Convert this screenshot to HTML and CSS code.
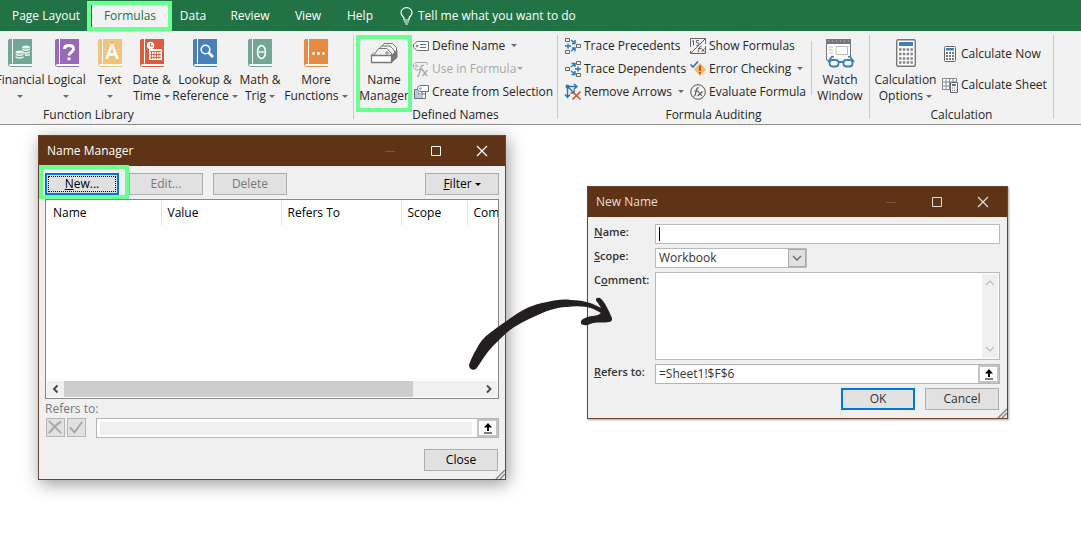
FILE: index.html
```html
<!DOCTYPE html>
<html lang="en">
<head>
<meta charset="utf-8">
<title>Name Manager</title>
<link rel="stylesheet" href="styles.css">
</head>
<body>
<svg class="defs" aria-hidden="true">
  <symbol id="book" viewBox="0 0 24 28">
    <path d="M2 0H24V25H3Q1 25 1 26.5T3 28Q0 28 0 25V2Q0 0 2 0Z" fill="currentColor"/>
    <path d="M4.500 0V24.500" stroke="#fff" stroke-width="1"/>
    <path d="M1 26.500Q1 25 3 25H24V27H1Z" fill="#fff"/>
    <path d="M1 26.500Q1.500 27.500 3 27.500H24" fill="none" stroke="currentColor"/>
  </symbol>
  <symbol id="up" viewBox="0 0 10 11">
    <path d="M5 0L9 4.500H6V8H4V4.500H1ZM1 9.500H9V10.500H1Z" fill="#000"/>
  </symbol>
  <symbol id="grip" viewBox="0 0 10 10">
    <path d="M1 10L10 1M5 10L10 5" stroke="#8a8a8a" stroke-width="1.500"/>
  </symbol>
</svg>

<nav class="tabs">
  <button class="tab">Page Layout</button>
  <button class="tab tab-active">Formulas<span class="mark mark-tab"></span></button>
  <button class="tab">Data</button>
  <button class="tab">Review</button>
  <button class="tab">View</button>
  <button class="tab">Help</button>
  <button class="tab tell">
    <svg width="13" height="18" viewBox="0 0 13 18" fill="none" stroke="#fff" stroke-width="1.200"><path d="M4 13V11.500C4 10 1 8.500 1 5.700A5.400 5 0 0 1 12 5.700C12 8.500 9 10 9 11.500V13ZM4 15H9M5 17H8"/></svg>
    Tell me what you want to do
  </button>
</nav>

<section class="ribbon">
  <div class="group group-library">
    <div class="library">
      <button class="big"><svg width="24" height="28" class="teal"><use href="#book"/><g fill="#eaf4ef"><ellipse cx="18" cy="8" rx="4" ry="1.600"/><path d="M14 9.500q4 2 8 0v1.500q-4 2-8 0zM14 12.200q4 2 8 0v1.500q-4 2-8 0zM17 15q3 1 5-.2v1.500q-2 1-5 .5z"/><ellipse cx="11.500" cy="13" rx="4" ry="1.600"/><path d="M7.500 14.500q4 2 8 0v1.500q-4 2-8 0zM7.500 17.200q4 2 8 0v1.500q-4 2-8 0z"/></g></svg><span>Financial<br><i class="caret"></i></span></button>
      <button class="big"><svg width="24" height="28" class="purple"><use href="#book"/><path d="M9.500 10Q9.500 6.500 14 6.500T18.500 10Q18.500 11.800 16.300 13.200T14 16.500M14 18.500V21.300" fill="none" stroke="#fff" stroke-width="2.900"/></svg><span>Logical<br><i class="caret"></i></span></button>
      <button class="big"><svg width="24" height="28" class="yellow"><use href="#book"/><path d="M8.500 20L13.500 6.500H14.500L19.500 20M10.500 15.500H17.500" fill="none" stroke="#fff" stroke-width="2.600"/></svg><span>Text<br><i class="caret"></i></span></button>
      <button class="big"><svg width="24" height="28" class="red"><use href="#book"/><circle cx="10.500" cy="6.500" r="3.700" fill="#fff"/><path d="M10.500 4V7H13" fill="none" stroke="#d75f40"/><path d="M9 10H22V21H9Z" fill="#fff"/><path d="M10 12.500H21M10 15.500H21M10 18.500H21M11.500 12V20M14 12V20M16.500 12V20M19 12V20" stroke="#d75f40" stroke-width=".9"/></svg><span>Date &amp;<br>Time <i class="caret"></i></span></button>
      <button class="big"><svg width="24" height="28" class="blue"><use href="#book"/><circle cx="12.500" cy="10.500" r="4.300" fill="none" stroke="#fff" stroke-width="1.600"/><path d="M15.500 13.500L20 18" stroke="#fff" stroke-width="2.700"/></svg><span>Lookup &amp;<br>Reference <i class="caret"></i></span></button>
      <button class="big"><svg width="24" height="28" class="teal"><use href="#book"/><ellipse cx="13.500" cy="13" rx="4" ry="6.500" fill="none" stroke="#fff" stroke-width="1.600"/><path d="M10 13H17" stroke="#fff" stroke-width="1.300"/></svg><span>Math &amp;<br>Trig <i class="caret"></i></span></button>
      <button class="big"><svg width="24" height="28" class="orange"><use href="#book"/><g fill="#fff"><circle cx="9.500" cy="14.500" r="1.400"/><circle cx="14.500" cy="14.500" r="1.400"/><circle cx="19.500" cy="14.500" r="1.400"/></g></svg><span>More<br>Functions <i class="caret"></i></span></button>
    </div>
    <h2 class="caption caption-library">Function Library</h2>
  </div>

  <div class="group group-names">
    <div class="row">
      <button class="big manager">
        <svg width="28" height="28" viewBox="0 0 28 28" fill="#f2f2f2" stroke="#777"><path d="M10 10L14 4.500H22.500L26.500 8.500V17L22 21"/><path d="M7 13L11.500 7H20L24.500 11.500V19"/><path d="M4 16L8.500 9.500H17L21.500 14.500V19H4Z"/><path d="M1.500 16.500H21.500V23.500H1.500Z" fill="#fff" stroke-width="1.300"/><path d="M1.500 16L4 13.500" /><path d="M21.500 16.500L27 11.500V18.500L21.500 23.500Z" fill="#777"/><circle cx="17" cy="14" r="1.200" fill="#fff"/></svg>
        <span>Name<br>Manager</span>
        <b class="mark mark-manager"></b>
      </button>
      <div class="stack">
        <button class="small"><svg width="16" height="16" viewBox="0 0 16 16" fill="none" stroke="#737373"><path d="M4 3.500H15.500V12.500H4L.5 9.500V6.500Z" fill="#fff"/><circle cx="4" cy="8" r="1"/><path d="M7 6.500H13M7 9.500H13" stroke="#3c78b8"/></svg>Define Name<i class="caret caret-far"></i></button>
        <button class="small" disabled><svg width="16" height="16" viewBox="0 0 16 16" fill="none" stroke="#aaa"><path d="M5 9H3L.5 6V3.500L3 1.500H14V4"/><circle cx="3.500" cy="5" r="1"/><path d="M4 15.500Q6 15.500 6.500 12L8 6Q8.500 4 11 4.500M5.500 8.500H10M9.500 9L14 15M14.500 9L9.500 15" stroke-width="1.300"/></svg>Use in Formula<i class="caret"></i></button>
        <button class="small"><svg width="16" height="16" viewBox="0 0 16 16" fill="#fff" stroke="#737373"><path d="M1.500 5.500H12.500V14.500H1.500ZM1.500 10H12.500M5 5.500V14.500M9 5.500V14.500" /><path d="M2 6H5V14H2ZM2 10.500H9V14H2Z" fill="#a9cbe6" stroke="none"/><path d="M7 1.500H15.500V7.500H7L4.500 5.500V3.500Z"/><circle cx="7.500" cy="4.500" r=".7"/></svg>Create from Selection</button>
      </div>
    </div>
    <h2 class="caption">Defined Names</h2>
  </div>

  <div class="group group-audit">
    <div class="row">
      <div class="stack stack-trace">
        <button class="small"><svg width="16" height="16" viewBox="0 0 16 16" fill="none" stroke="#666"><path d="M.5 .5H4.500V3.500H.5ZM.5 12.500H4.500V15.500H.5ZM11.500 6.500H15.500V9.500H11.500Z"/><path d="M0 8H6M3 5.500V10.500M6 2L10 5M10 2V5.500H7M6 13L10 10M7 10H10V13.500" stroke="#2e75b6" stroke-width="1.400"/></svg>Trace Precedents</button>
        <button class="small"><svg width="16" height="16" viewBox="0 0 16 16" fill="none" stroke="#666"><path d="M.5 6.500H4.500V9.500H.5ZM11.500 .5H15.500V3.500H11.500ZM11.500 12.500H15.500V15.500H11.500Z"/><path d="M10 8H16M13 5.500V10.500M6 6L10 3M6.500 2.500H10V6M6 10L10 13M10 10V13.500H6.500" stroke="#2e75b6" stroke-width="1.400"/></svg>Trace Dependents</button>
        <button class="small"><svg width="16" height="16" viewBox="0 0 16 16" fill="none"><path d="M2.500 2V13M0 10.500L2.500 13.500L5 10.500M3 2.500H12M9 0L12 2.500L9 5M3 3L9 9M9 5.500V9H5.500" stroke="#2e75b6" stroke-width="1.400"/><circle cx="2.500" cy="2.500" r="2" fill="#2e75b6"/><path d="M7.500 7.500L15.500 15.500M15.500 7.500L7.500 15.500" stroke="#d8532b" stroke-width="1.700"/></svg>Remove Arrows<i class="caret caret-far"></i></button>
      </div>
      <div class="stack stack-check">
        <button class="small"><svg width="16" height="16" viewBox="0 0 16 16" fill="none" stroke="#666"><path d="M.5 9V.5H15.500V6M15.500 8V15.500H.5V13M1 15L15 1M3.500 2.500V7.500M2 3.500L3.500 2.500M9 2.500H6.500V4.500Q9 4.500 9 6T6.500 7.500M8 14.500L10 8.500H11.500M8 10.500H11M11.500 10.500L14.500 14M14.500 10.500L11.500 14"/></svg>Show Formulas</button>
        <button class="small"><svg width="16" height="16" viewBox="0 0 16 16"><path d="M10 2L16 8.500L10 15L4 8.500Z" fill="#f0bd62"/><path d="M10 4.500V10M10 11V12.800" stroke="#c8401e" stroke-width="1.700"/><path d="M.5 3.500L3 6L8 .5" fill="none" stroke="#2e75b6" stroke-width="1.700"/></svg>Error Checking<i class="caret caret-far"></i></button>
        <button class="small"><svg width="16" height="16" viewBox="0 0 16 16" fill="none" stroke="#555"><circle cx="8" cy="8" r="7.300"/><path d="M3.500 12.500Q5 12.500 5.500 10L6.500 5.500Q7 3.500 9 4M4.500 7H8.500M8 7.500L12 12M12.500 7.500L7.500 12" stroke-width="1.100"/></svg>Evaluate Formula</button>
      </div>
      <button class="big watch">
        <svg width="30" height="30" viewBox="0 0 30 30" fill="none" stroke="#777"><path d="M1.500 1.500H25.500V22H1.500Z" fill="#fff"/><path d="M1 1H26V6H1Z" fill="#777" stroke="none"/><path d="M3 3H24" stroke="#bbb" stroke-dasharray="1 3"/><path d="M11 8.500H22.500V16.500H11ZM4 9H8M4 12H8M4 15H8" stroke="#bbb"/><path d="M3 20H29V29H3Z" fill="#f2f2f2" stroke="none"/><g stroke="#3f7fbe" stroke-width="1.800"><rect x="4.500" y="22" width="9" height="6.500" rx="3" fill="#fff"/><rect x="18.500" y="22" width="9" height="6.500" rx="3" fill="#fff"/><path d="M13.500 24H18.500M3 24L7 18.500L9 19M29 24L25 18.500L23 19"/></g></svg>
        <span>Watch<br>Window</span>
      </button>
    </div>
    <h2 class="caption">Formula Auditing</h2>
  </div>

  <div class="group group-calc">
    <div class="row">
      <button class="big options">
        <svg width="20" height="28" viewBox="0 0 20 28"><rect x=".7" y=".7" width="18.600" height="26.600" rx="1.500" fill="#fff" stroke="#777" stroke-width="1.400"/><path d="M3 3H17V7H3Z" fill="#3f7fbe"/><path d="M3 10.500H17M3 15H17M3 19.500H17M3 23.500H17" stroke="#858585" stroke-width="2.500" stroke-dasharray="2.500 1.300"/></svg>
        <span>Calculation<br>Options <i class="caret"></i></span>
      </button>
      <div class="stack stack-calc">
        <button class="small"><svg width="16" height="16" viewBox="0 0 16 16"><rect x="2.500" y=".5" width="11" height="15" rx="1" fill="#fff" stroke="#666"/><path d="M4 2H12V4.500H4Z" fill="#3f7fbe"/><path d="M4 7H12.500M4 10H12.500M4 13H12.500" stroke="#777" stroke-width="2" stroke-dasharray="2 1"/></svg>Calculate Now</button>
        <button class="small"><svg width="16" height="16" viewBox="0 0 16 16"><path d="M.5 1.500H14.500V12.500H.5ZM.5 5H14.500M.5 9H14.500M4 1.500V12.500M7.500 1.500V12.500M11 1.500V12.500" fill="#fff" stroke="#888"/><path d="M8.500 5.500H15.500V15.500H8.500Z" fill="#fff" stroke="#666"/><path d="M10 7H14V9H10Z" fill="#3f7fbe"/><path d="M10 11H14.500M10 13.500H14.500" stroke="#777" stroke-dasharray="1 1"/></svg>Calculate Sheet</button>
      </div>
    </div>
    <h2 class="caption">Calculation</h2>
  </div>
</section>

<main class="desktop">
  <section class="window window-manager">
    <header class="titlebar">
      <h1 class="title">Name Manager</h1>
      <div class="controls">
        <svg viewBox="0 0 12 12"><path d="M1 6.500H11" stroke="#80573d"/></svg>
        <svg viewBox="0 0 12 12"><path d="M1.500 1.500H10.500V10.500H1.500Z" fill="none" stroke="#fff"/></svg>
        <svg viewBox="0 0 12 12"><path d="M1 1L11 11M11 1L1 11" stroke="#fff" stroke-width="1.200"/></svg>
      </div>
    </header>
    <div class="pane">
      <div class="toolbar">
        <button class="btn btn-focus"><span><u>N</u>ew...</span></button>
        <button class="btn" disabled>Edit...</button>
        <button class="btn" disabled>Delete</button>
        <button class="btn btn-filter"><span><u>F</u>ilter</span><i class="caret caret-dark"></i></button>
        <span class="mark mark-new"></span>
      </div>
      <div class="list">
        <table class="names">
          <thead><tr><th class="wide">Name</th><th class="wide">Value</th><th class="wide">Refers To</th><th class="scope">Scope</th><th>Com</th></tr></thead>
        </table>
        <div class="hscroll">
          <svg viewBox="0 0 16 16"><path d="M10 4.500L6.500 8L10 11.500" fill="none" stroke="#444" stroke-width="1.800"/></svg>
          <div class="track"><div class="thumb"></div></div>
          <svg viewBox="0 0 16 16"><path d="M6.500 4.500L10 8L6.500 11.500" fill="none" stroke="#444" stroke-width="1.800"/></svg>
        </div>
      </div>
      <label class="refers-label" for="refers">Refers to:</label>
      <div class="refers">
        <button class="tool" disabled aria-label="Cancel edit"><svg viewBox="0 0 18 18"><path d="M2 2Q7 7 15 15M15 2.500Q8 7 2 15" fill="none" stroke="#a8a8a8" stroke-width="2"/></svg></button>
        <button class="tool" disabled aria-label="Accept edit"><svg viewBox="0 0 18 18"><path d="M2 9L7 14L15 3" fill="none" stroke="#a8a8a8" stroke-width="2"/></svg></button>
        <div class="ref-box ref-box-off">
          <input id="refers" class="ref-input" disabled>
          <button class="pick" aria-label="Collapse"><svg width="10" height="11"><use href="#up"/></svg></button>
        </div>
      </div>
      <div class="actions"><button class="btn">Close</button></div>
    </div>
    <svg class="grip"><use href="#grip"/></svg>
  </section>

  <section class="window window-new">
    <header class="titlebar">
      <h1 class="title">New Name</h1>
      <div class="controls">
        <svg viewBox="0 0 12 12"><path d="M1 6.500H11" stroke="#80573d"/></svg>
        <svg viewBox="0 0 12 12"><path d="M1.500 1.500H10.500V10.500H1.500Z" fill="none" stroke="#e8ddd5"/></svg>
        <svg viewBox="0 0 12 12"><path d="M1 1L11 11M11 1L1 11" stroke="#e8ddd5" stroke-width="1.200"/></svg>
      </div>
    </header>
    <form class="form">
      <label for="name"><u>N</u>ame:</label>
      <div class="field name-field"><span class="cursor"></span><input id="name"></div>
      <label for="scope"><u>S</u>cope:</label>
      <div class="field scope-field">
        <select id="scope"><option>Workbook</option></select>
        <span class="drop"><svg viewBox="0 0 10 10"><path d="M1 3L5 7L9 3" fill="none" stroke="#666" stroke-width="1.300"/></svg></span>
      </div>
      <label for="comment">C<u>o</u>mment:</label>
      <div class="field comment-field">
        <textarea id="comment"></textarea>
        <div class="vscroll">
          <svg viewBox="0 0 10 10"><path d="M1 7L5 3L9 7" fill="none" stroke="#c2c2c2" stroke-width="1.500"/></svg>
          <svg viewBox="0 0 10 10"><path d="M1 3L5 7L9 3" fill="none" stroke="#c2c2c2" stroke-width="1.500"/></svg>
        </div>
      </div>
      <label for="target"><u>R</u>efers to:</label>
      <div class="ref-box">
        <input id="target" class="ref-input" value="=Sheet1!$F$6">
        <button type="button" class="pick" aria-label="Collapse"><svg width="10" height="11"><use href="#up"/></svg></button>
      </div>
      <div class="actions actions-new">
        <button type="button" class="btn btn-default">OK</button>
        <button type="button" class="btn">Cancel</button>
      </div>
    </form>
    <svg class="grip"><use href="#grip"/></svg>
  </section>

  <svg class="arrow" viewBox="0 0 144 72" fill="#231f20">
    <path d="M0 67C2 61 4 57 7 52C10 46 12 43 17 38C23 33 29 29 36 24C43 19 50 14 58 10C65 7 71 5 78 4C86 2 94 1 102 2C109 2 115 3 121 5C125 6 128 8 132 10L129 5C127 3 126 1 128 0C130 -1 132 0 134 3C137 7 140 13 142 18C144 21 143 24 140 24C135 25 130 24 124 25C120 26 118 28 115 27C111 27 111 23 114 21C119 18 124 18 129 17L132 15C127 12 123 10 118 9C111 8 105 8 98 9C91 9 85 11 78 13C71 16 64 19 58 22C52 25 46 28 41 32C36 36 32 40 28 44C24 48 21 51 18 55C14 60 11 66 7 71C4 73 0 71 0 67Z"/>
  </svg>
</main>
</body>
</html>
```
FILE: styles.css
```css
* { box-sizing: border-box; }

body {
  margin: 0;
  min-height: 100vh;
  display: flex;
  flex-direction: column;
  overflow: hidden;
  background: #fff;
  color: #262626;
  font: 12px/16px "Open Sans", "Noto Sans", sans-serif;
}

button, input, select, textarea {
  margin: 0;
  padding: 0;
  border: 0;
  border-radius: 0;
  background: none;
  color: inherit;
  font: inherit;
  outline: 0;
}

svg { display: block; flex: none; overflow: visible; }
h1, h2 { margin: 0; font: inherit; }
.defs { position: absolute; width: 0; height: 0; }

.mark {
  position: absolute;
  z-index: 2;
  border: 4px solid #69ff91;
  pointer-events: none;
}

/* Tabs */
.tabs {
  display: grid;
  grid-template-columns: 92px 76px 50px 64px 52px 52px auto;
  justify-content: start;
  height: 31px;
  background: #217346;
}
.tab {
  position: relative;
  color: #fff;
  white-space: nowrap;
}
.tab-active {
  margin-top: 1px;
  padding-bottom: 1px;
  background: #f2f2f2;
  color: #217346;
}
.mark-tab { inset: 0 -4px 0 -5px; }
.tell {
  display: flex;
  align-items: center;
  gap: 5px;
  padding-left: 14px;
}

/* Ribbon */
.ribbon {
  display: flex;
  padding: 4px 0 5px;
  border-bottom: 1px solid #919191;
  background: #f2f2f2;
}
.group {
  display: flex;
  flex-direction: column;
  height: 84px;
  border-right: 1px solid #c8c8c8;
}
.group-library { width: 354px; }
.group-names { width: 204px; }
.group-audit { width: 312px; }
.group-calc { width: 184px; }
.caption {
  margin-top: 3px;
  text-align: center;
}
.caption-library { padding-right: 176px; }
.row { display: flex; height: 70px; }
.library {
  display: grid;
  grid-template-columns: 44px 49px 37px 47px 60px 50px 62px;
  height: 70px;
  margin-left: -2px;
}
.big {
  position: relative;
  display: flex;
  flex-direction: column;
  align-items: center;
  gap: 5px;
  padding-top: 4px;
  white-space: nowrap;
}
.big > span { margin: 0 -8px; }
.manager { width: 58px; padding-left: 2px; }
.mark-manager { inset: 0 0 -8px 2px; }

.stack {
  display: flex;
  flex-direction: column;
  margin-top: -1px;
}
.small {
  display: flex;
  align-items: center;
  gap: 3px;
  height: 23px;
  white-space: nowrap;
}
.small:disabled { color: #a6a6a6; }
.stack .small svg { margin-left: 1px; }
.stack-trace { width: 125px; padding-left: 6px; }
.stack-check { width: 128px; padding-left: 6px; }
.watch {
  width: 58px;
  padding-top: 3px;
  gap: 4px;
}
.watch::before {
  content: "";
  position: absolute;
  left: 0;
  top: 6px;
  height: 54px;
  border-left: 1px solid #c8c8c8;
}
.options { width: 71px; }
.stack-calc { gap: 8px; padding-top: 8px; }

.teal { color: #73a795; }
.purple { color: #9868b9; }
.yellow { color: #edc57b; }
.red { color: #d75f40; }
.blue { color: #4a80b8; }
.orange { color: #e68c42; }

.caret {
  display: inline-block;
  vertical-align: 2px;
  border: 3px solid transparent;
  border-top-color: #6a6a6a;
  border-bottom: 0;
}
.small .caret { margin-left: -2px; }
.small:disabled .caret { border-top-color: #a6a6a6; }
.small .caret-far { margin-left: 3px; }
.caret-dark { border-top-color: #000; }

/* Windows */
.desktop {
  position: relative;
  flex: 1;
}
.window {
  position: absolute;
  border: 1px solid #6b452b;
  background: #f0f0f0;
  color: #000;
}
.window-manager {
  left: 38px;
  top: 10px;
  width: 468px;
  box-shadow: 2px 4px 16px rgba(0, 0, 0, .4);
}
.window-new {
  left: 587px;
  top: 61px;
  width: 421px;
  box-shadow: 1px 1px 2px rgba(0, 0, 0, .35);
  color: #333;
}
.titlebar {
  display: flex;
  align-items: center;
  justify-content: space-between;
  height: 30px;
  padding: 0 17px 0 8px;
  background: #5f3416;
  color: #fff;
}
.window-new .titlebar {
  padding-right: 18px;
  color: #e8ddd5;
}
.controls { display: flex; gap: 34px; }
.controls svg { width: 12px; height: 12px; }
.grip {
  position: absolute;
  right: 0;
  bottom: 0;
  width: 10px;
  height: 10px;
}

.btn {
  display: flex;
  align-items: center;
  justify-content: center;
  gap: 3px;
  width: 74px;
  height: 22px;
  border: 1px solid #adadad;
  background: #e1e1e1;
}
.btn:disabled { color: #777; }
.btn-focus, .btn-default { border: 2px solid #0078d7; }
.btn-focus {
  outline: 1px dotted #000;
  outline-offset: -4px;
}
.btn-filter { margin-left: auto; }

.pane { padding: 7px 6px 8px; }
.toolbar {
  position: relative;
  display: flex;
  gap: 10px;
}
.mark-new { inset: -8px 370px -4px -6px; }
.list {
  display: flex;
  flex-direction: column;
  justify-content: space-between;
  height: 200px;
  margin-top: 4px;
  padding: 1px;
  border: 1px solid #828790;
  background: #fff;
  overflow: hidden;
}
.names {
  width: 100%;
  table-layout: fixed;
  border-collapse: collapse;
}
.names th {
  height: 24px;
  padding: 0 0 0 6px;
  border-right: 1px solid #e5e5e5;
  font-weight: 400;
  text-align: left;
}
.names th:last-child { border: 0; }
.names .wide { width: 120px; }
.names .wide:first-child { width: 114px; }
.names .scope { width: 66px; }
.hscroll {
  display: flex;
  height: 16px;
  background: #f0f0f0;
}
.hscroll svg { width: 17px; height: 16px; }
.track { flex: 1; }
.thumb {
  width: 84%;
  height: 100%;
  background: #cdcdcd;
}
.refers-label {
  display: block;
  margin: 2px 0 1px;
  color: #777;
}
.refers { display: flex; gap: 2px; padding-left: 1px; }
.tool {
  width: 19px;
  height: 19px;
  border: 1px solid #b5b5b5;
  background: #e1e1e1;
}
.ref-box {
  flex: 1;
  display: flex;
  height: 20px;
  border: 1px solid #b4b4bb;
  background: #fff;
}
.ref-box-off { margin-left: 8px; }
.ref-input {
  flex: 1;
  min-width: 0;
  padding: 0 3px;
}
.ref-input:disabled {
  margin: 3px 5px 2px 3px;
  background: #f0f0f0;
}
.pick {
  display: flex;
  align-items: center;
  justify-content: center;
  width: 21px;
  border: 2px solid #c4c4c4;
  background: #fff;
}
.actions {
  display: flex;
  justify-content: flex-end;
  gap: 10px;
  margin-top: 11px;
  padding-right: 1px;
}

/* New Name form */
.form {
  display: grid;
  grid-template-columns: 61px 1fr;
  row-gap: 4px;
  padding: 7px 7px 8px 6px;
}
.form label { font-weight: 600; font-size: 11px; }
.field {
  position: relative;
  display: flex;
  align-items: center;
  height: 20px;
  border: 1px solid #b9b9c2;
  background: #fff;
}
.field input { flex: 1; align-self: stretch; }
.cursor {
  width: 1px;
  height: 14px;
  margin: 0 3px;
  background: #000;
}
.scope-field { width: 152px; }
.scope-field select {
  flex: 1;
  padding-left: 3px;
  appearance: none;
}
.drop {
  display: flex;
  align-items: center;
  justify-content: center;
  width: 18px;
  height: 18px;
  border: 1px solid #aaa;
  background: #e1e1e1;
}
.drop svg, .vscroll svg { width: 10px; height: 10px; }
.comment-field { height: 88px; }
.comment-field textarea {
  flex: 1;
  height: 100%;
  resize: none;
}
.vscroll {
  display: flex;
  flex-direction: column;
  align-items: center;
  justify-content: space-between;
  width: 16px;
  height: 84px;
  margin-right: 1px;
  padding: 4px 0;
  background: #f0f0f0;
}
.actions-new { grid-column: 2; margin-top: 0; }

.arrow {
  position: absolute;
  left: 469px;
  top: 173px;
  width: 144px;
  height: 72px;
}
```
